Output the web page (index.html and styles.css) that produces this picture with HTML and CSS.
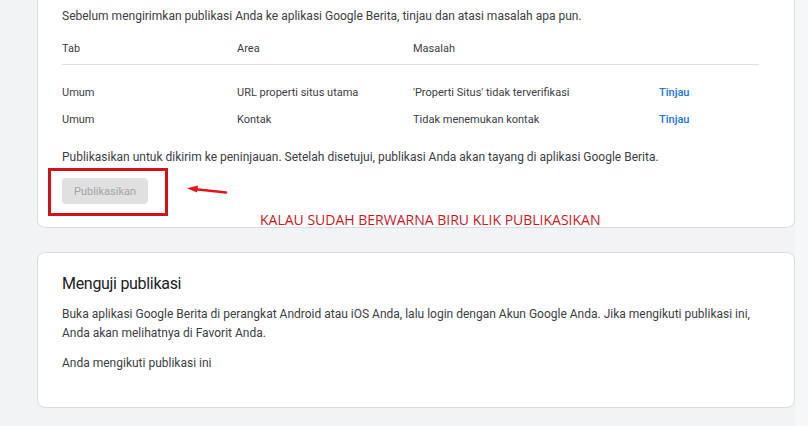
FILE: index.html
```html
<!DOCTYPE html>
<html lang="id">
<head>
    <meta charset="utf-8">
    <title>Publikasi - Google Berita</title>
    <link rel="stylesheet" href="styles.css">
</head>
<body>
    <div class="page">
        <div class="card card-review">
            <p class="intro">Sebelum mengirimkan publikasi Anda ke aplikasi Google Berita, tinjau dan atasi masalah apa pun.</p>

            <div class="issues">
                <div class="issue-row issue-head">
                    <span>Tab</span>
                    <span>Area</span>
                    <span>Masalah</span>
                    <span></span>
                </div>
                <div class="issue-body">
                    <div class="issue-row">
                        <span>Umum</span>
                        <span>URL properti situs utama</span>
                        <span>'Properti Situs' tidak terverifikasi</span>
                        <a href="#" class="review-link">Tinjau</a>
                    </div>
                    <div class="issue-row">
                        <span>Umum</span>
                        <span>Kontak</span>
                        <span>Tidak menemukan kontak</span>
                        <a href="#" class="review-link">Tinjau</a>
                    </div>
                </div>
            </div>

            <p class="publish-note">Publikasikan untuk dikirim ke peninjauan. Setelah disetujui, publikasi Anda akan tayang di aplikasi Google Berita.</p>
            <button class="publish-button" disabled>Publikasikan</button>

            <!-- annotation drawn over the screenshot -->
            <div class="mark-box"></div>
            <svg class="mark-arrow" width="44" height="10" viewBox="0 0 44 10">
                <path d="M40 7.5 L10 4.2" stroke="#e3161c" stroke-width="2.6" stroke-linecap="round" fill="none"/>
                <path d="M1 3.2 L12 0.6 L11 7.6 Z" fill="#e3161c"/>
            </svg>
            <div class="mark-text">KALAU SUDAH BERWARNA BIRU KLIK PUBLIKASIKAN</div>
        </div>

        <div class="card card-test">
            <h2 class="card-title">Menguji publikasi</h2>
            <p>Buka aplikasi Google Berita di perangkat Android atau iOS Anda, lalu login dengan Akun Google Anda. Jika mengikuti publikasi ini, Anda akan melihatnya di Favorit Anda.</p>
            <p class="follow-state">Anda mengikuti publikasi ini</p>
        </div>
    </div>
</body>
</html>
```

FILE: styles.css
```css
* {
    box-sizing: border-box;
    margin: 0;
    padding: 0;
}
body {
    background: linear-gradient(to right, #f1f3f4 795px, #f6f7f8 795px);
    color: #3c4043;
    font-family: Roboto, "Liberation Sans", Arial, sans-serif;
    font-size: 12px;
    line-height: 20px;
    height: 426px;
    overflow: hidden;
}
.page {
    padding-left: 37px;
    width: 795px;
}
.card {
    background-color: #fff;
    border: 1px solid #dadce0;
    border-radius: 8px;
    padding: 0 24px;
}
.card-review {
    position: relative;
    border-top: none;
    border-top-left-radius: 0;
    border-top-right-radius: 0;
    padding-top: 6px;
    padding-bottom: 23px;
}
.issues {
    margin-top: 8px;
    width: 697px;
}
.issue-row {
    display: grid;
    grid-template-columns: 175px 176px 246px 1fr;
    align-items: center;
    height: 27px;
    font-size: 11px;
}
.issue-head {
    height: 31px;
    border-bottom: 1px solid #e0e0e0;
}
.issue-body {
    padding-top: 14px;
}
.review-link {
    color: #1a73e8;
    font-weight: 500;
    text-decoration: none;
}
.publish-note {
    margin-top: 14px;
}
.publish-button {
    display: block;
    margin-top: 11px;
    height: 26px;
    width: 86px;
    border: none;
    border-radius: 4px;
    background-color: #e0e0e0;
    color: #a4a4a4;
    font-family: Roboto, "Liberation Sans", Arial, sans-serif;
    font-size: 11px;
}
.mark-box {
    position: absolute;
    left: 10px;
    top: 168px;
    width: 120px;
    height: 48px;
    border: 3px solid #d0101a;
}
.mark-arrow {
    position: absolute;
    left: 148px;
    top: 185px;
}
.mark-text {
    position: absolute;
    left: 222px;
    top: 210px;
    color: #c8161d;
    font-family: "Open Sans", "DejaVu Sans", sans-serif;
    font-size: 14px;
    line-height: 20px;
    white-space: nowrap;
}
.card-test {
    margin-top: 24px;
    padding-top: 19px;
    padding-bottom: 34px;
}
.card-title {
    color: #202124;
    font-size: 16px;
    font-weight: 400;
    letter-spacing: -0.3px;
    line-height: 24px;
    margin-bottom: 9px;
}
.card-test p {
    line-height: 19px;
}
.card-test .follow-state {
    margin-top: 11px;
}
```
